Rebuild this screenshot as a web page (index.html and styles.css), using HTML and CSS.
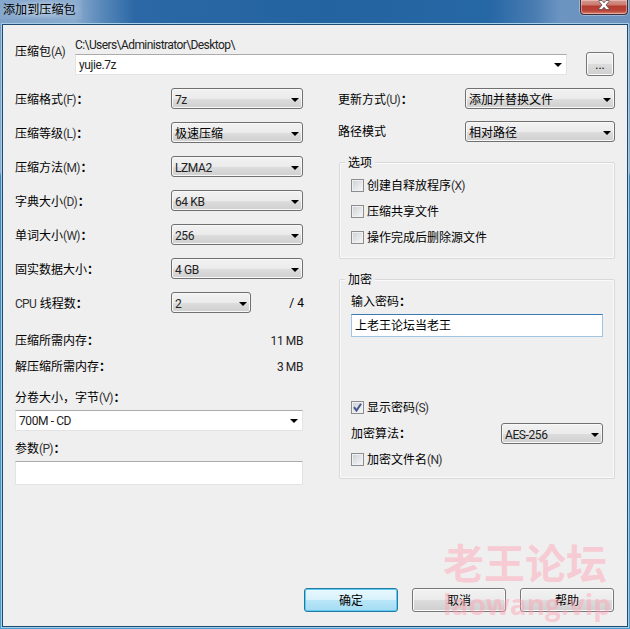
FILE: index.html
```html
<!DOCTYPE html>
<html lang="zh-CN">
<head>
<meta charset="utf-8">
<title>添加到压缩包</title>
<link rel="stylesheet" href="styles.css">
</head>
<body>
<div class="window">
  <header class="titlebar">
    <h1 class="title">添加到压缩包</h1>
    <button class="close" aria-label="关闭">
      <svg width="12" height="10" viewBox="0 0 12 10"><path d="M1 .5h3l2 2.3L8 .5h3v1L8 5l3 3.500v1H8L6 7.200 4 9.500H1v-1L4 5 1 1.500z" fill="#fff" stroke="#54464f" stroke-width=".8"/></svg>
    </button>
  </header>
  <main class="client">
    <section class="archive">
      <div class="archive-label">压缩包<i>(A)</i></div>
      <div class="archive-file">
        <div class="path">C:\Users\Administrator\Desktop\</div>
        <div class="combo"><span class="latin">yujie.7z</span><b class="arrow"></b></div>
      </div>
      <button class="btn browse">...</button>
    </section>
    <div class="columns">
      <section class="left">
        <div class="row"><label>压缩格式<i>(F)</i><em>：</em></label><div class="select"><span class="latin">7z</span><b class="arrow"></b></div></div>
        <div class="row"><label>压缩等级<i>(L)</i><em>：</em></label><div class="select"><span>极速压缩</span><b class="arrow"></b></div></div>
        <div class="row"><label>压缩方法<i>(M)</i><em>：</em></label><div class="select"><span class="latin">LZMA2</span><b class="arrow"></b></div></div>
        <div class="row"><label>字典大小<i>(D)</i><em>：</em></label><div class="select"><span class="latin">64 KB</span><b class="arrow"></b></div></div>
        <div class="row"><label>单词大小<i>(W)</i><em>：</em></label><div class="select"><span class="latin">256</span><b class="arrow"></b></div></div>
        <div class="row"><label>固实数据大小<em>：</em></label><div class="select"><span class="latin">4 GB</span><b class="arrow"></b></div></div>
        <div class="row"><label><i>CPU</i> 线程数<em>：</em></label><div class="select short"><span class="latin">2</span><b class="arrow"></b></div><span class="total">/ 4</span></div>
        <div class="memory first"><span>压缩所需内存<em>：</em></span><span class="latin">11 MB</span></div>
        <div class="memory"><span>解压缩所需内存<em>：</em></span><span class="latin">3 MB</span></div>
        <div class="caption volume">分卷大小，字节<i>(V)</i><em>：</em></div>
        <div class="combo"><span class="latin">700M - CD</span><b class="arrow"></b></div>
        <div class="caption params">参数<i>(P)</i><em>：</em></div>
        <div class="field"></div>
      </section>
      <section class="right">
        <div class="row update"><label>更新方式<i>(U)</i><em>：</em></label><div class="select"><span>添加并替换文件</span><b class="arrow"></b></div></div>
        <div class="row mode"><label>路径模式</label><div class="select"><span>相对路径</span><b class="arrow"></b></div></div>
        <fieldset class="options">
          <legend>选项</legend>
          <div class="check"><b class="box"></b>创建自释放程序<i>(X)</i></div>
          <div class="check"><b class="box"></b>压缩共享文件</div>
          <div class="check"><b class="box"></b>操作完成后删除源文件</div>
        </fieldset>
        <fieldset class="encrypt">
          <legend>加密</legend>
          <div class="caption">输入密码<em>：</em></div>
          <div class="field password">上老王论坛当老王</div>
          <div class="check show"><b class="box"><svg width="9" height="9" viewBox="0 0 9 9"><path d="M1 4.200 3.500 7.500 8 .8" fill="none" stroke="#42558f" stroke-width="2"/></svg></b>显示密码<i>(S)</i></div>
          <div class="row method"><label>加密算法<em>：</em></label><div class="select"><span class="latin">AES-256</span><b class="arrow"></b></div></div>
          <div class="check"><b class="box"></b>加密文件名<i>(N)</i></div>
        </fieldset>
      </section>
    </div>
    <footer class="actions">
      <button class="btn primary">确定</button>
      <button class="btn">取消</button>
      <button class="btn">帮助</button>
    </footer>
  </main>
  <div class="watermark"><div class="mark-name">老王论坛</div><div class="mark-site">laowang.vip</div></div>
</div>
</body>
</html>
```
FILE: styles.css
```css
* { box-sizing: border-box; }
body {
  margin: 0;
  font: 12px/16px Roboto, "Noto Sans CJK SC", sans-serif;
  color: #000;
  overflow: hidden;
}
i { font-style: normal; color: #333; letter-spacing: -0.7px; margin-right: .7px; }
em { font-style: normal; font-weight: 700; }
.latin { color: #222; letter-spacing: -0.4px; }
button { font: inherit; color: inherit; padding: 0; }
.window {
  position: relative;
  display: flex;
  flex-direction: column;
  width: 630px;
  height: 629px;
  padding: 0 2px 2px;
  background: linear-gradient(180deg, #7597c0 0, #8fb0d0 172px, #3f86b5 176px, #4c9ed0 100%);
}
.titlebar {
  display: flex;
  justify-content: space-between;
  align-items: flex-start;
  height: 24px;
  margin: 0 -2px;
  background: linear-gradient(90deg, #7fa2c8 0, #8aaace 75px, #5b8abb 100px, #2b68a5 135px, #2263a0 330px, #2667a5 490px, #4a7db2 535px, #6c94c1 560px, #6d92bd 100%);
}
.title {
  margin: 0;
  padding: 2px 6px 1px 3px;
  font-size: 12.1px;
  font-weight: 400;
  line-height: 16px;
  background: radial-gradient(closest-side, rgba(225, 236, 246, .65), rgba(190, 212, 233, .1));
}
.close {
  display: flex;
  justify-content: center;
  width: 48px;
  height: 15px;
  margin-right: 2px;
  border: 1px solid #3a3042;
  border-top: 0;
  border-radius: 0 0 4px 4px;
  background: linear-gradient(#d39a92 0, #c97970 5px, #b43b30 6px, #b9453a 11px, #da8a74 100%);
  box-shadow: inset 0 0 0 1px rgba(255, 220, 215, .45), 0 0 0 1px #9bb3cf;
}
.client {
  flex: 1;
  border: 1px solid #1c4a72;
  box-shadow: 0 0 0 1px #a5cfe8;
  background: #efefef;
  padding: 13px 12px 0;
}
.archive { display: flex; height: 50px; }
.archive-label { width: 60px; padding-top: 6px; }
.archive-file { width: 492px; }
.path { height: 16px; line-height: 14px; color: #222; letter-spacing: -.58px; }
.combo, .field {
  display: flex;
  justify-content: space-between;
  align-items: center;
  height: 21px;
  padding: 0 4px 0 3px;
  border: 1px solid #e3e3e3;
  border-top-color: #ababab;
  background: #fff;
}
.arrow {
  width: 0;
  border: 4px solid transparent;
  border-top-color: #000;
  border-bottom: 0;
}
.btn {
  width: 94px;
  height: 24px;
  padding-top: 2px;
  border: 1px solid #777;
  border-radius: 3px;
  background: linear-gradient(#f2f2f2 0, #ebebeb 50%, #dcdcdc 52%, #cfcfcf 100%);
  box-shadow: inset 0 0 0 1px #fafafa;
}
.browse { width: 28px; margin: 14px 0 0 19px; }
.columns { display: flex; gap: 35px; height: 475px; }
.left { width: 288px; }
.right { width: 277px; }
.row { display: flex; align-items: center; height: 21px; margin-bottom: 13px; }
.row label { padding-top: 2px; }
.left .row label { width: 156px; }
.select {
  display: flex;
  justify-content: space-between;
  align-items: center;
  flex: 1;
  height: 21px;
  padding: 2px 3px 0 3px;
  border: 1px solid #707070;
  border-radius: 3px;
  background: linear-gradient(#f2f2f2 0, #ebebeb 50%, #dddddd 52%, #cfcfcf 100%);
  box-shadow: inset 0 0 0 1px #f8f8f8;
}
.select.short { flex: 0 0 80px; }
.total { margin-left: auto; margin-right: -1px; }
.memory { display: flex; justify-content: space-between; height: 26px; }
.memory.first { margin-top: 20px; }
.caption { height: 16px; }
.volume { margin: 5px 0 4px; }
.params { margin: 10px 0 4px; }
.left .field { height: 24px; }
.right .row label { width: 127px; }
.right .update { margin-bottom: 12px; }
.right .mode { margin-bottom: 12px; }
.right .mode label { padding-top: 0; }
fieldset {
  min-width: 0;
  height: 105px;
  margin: 0 0 0 1px;
  padding: 0 11px;
  border: 1px solid #d9d9d9;
  border-radius: 2px;
  box-shadow: inset 0 0 0 1px #fafafa;
}
legend { height: 16px; line-height: 18px; margin-left: -6px; padding: 0 3px; background: #efefef; }
.check { display: flex; align-items: center; height: 16px; margin-bottom: 10px; line-height: 18px; }
.options .check:first-of-type { margin-top: 8px; }
.box {
  display: flex;
  align-items: center;
  justify-content: center;
  width: 13px;
  height: 13px;
  margin: -1px 3px 0 0;
  border: 1px solid #8b8d90;
  background: linear-gradient(135deg, #ccd0d4, #f8f8f8);
  box-shadow: inset 0 0 0 1px #f0f0f0;
}
.encrypt { height: 208px; margin-top: 12px; }
.encrypt .caption { margin-top: 7px; }
.encrypt .field {
  height: 23px;
  margin-top: 4px;
  border-color: #9fc5e2;
  border-top-color: #397ab2;
}
.show { margin: 63px 0 7px; }
.right .method { margin-bottom: 8px; }
.right .method label { width: 150px; padding-top: 0; }
.actions { display: flex; gap: 14px; justify-content: flex-end; padding: 25px 1px 0 0; }
.primary {
  border: 1px solid #28779f;
  background: linear-gradient(#e9f8fe 0, #d7f1fb 50%, #b8e6f8 52%, #a4dbf2 100%);
  box-shadow: inset 0 0 0 1px #5ccdf5;
}
.watermark {
  position: absolute;
  left: 443px;
  top: 537px;
  width: 170px;
  color: rgba(255, 164, 180, .48);
  font-weight: 700;
  pointer-events: none;
}
.mark-name { font-family: "Noto Sans CJK SC", sans-serif; font-size: 41px; line-height: 48px; white-space: nowrap; }
.mark-site { font-family: "Open Sans", sans-serif; font-size: 28px; line-height: 38px; white-space: nowrap; }
```
